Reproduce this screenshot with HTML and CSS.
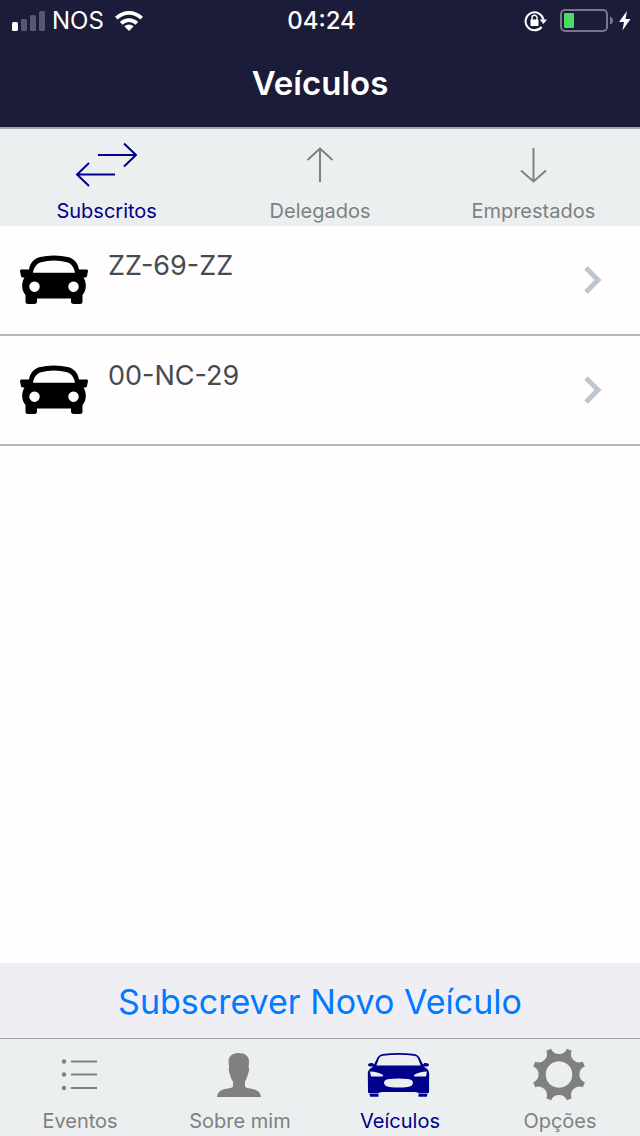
FILE: index.html
```html
<!DOCTYPE html>
<html lang="pt">
<head>
<meta charset="utf-8">
<meta name="viewport" content="width=device-width, initial-scale=1">
<title>Veículos</title>
<link rel="stylesheet" href="styles.css">
</head>
<body>
<div class="app">
  <header class="header">
    <div class="status">
      <div class="status-side">
        <svg class="signal" viewBox="0 0 34 22" aria-hidden="true">
          <rect x="0" y="12" width="6" height="9" rx="1.5" fill="#fff"/>
          <g fill="#565770">
            <rect x="9" y="9" width="6" height="12" rx="1.5"/>
            <rect x="18" y="5" width="6" height="16" rx="1.5"/>
            <rect x="27" y="1" width="6" height="20" rx="1.5"/>
          </g>
        </svg>
        <span class="carrier">NOS</span>
        <svg class="wifi" viewBox="0 0 28 22" aria-hidden="true">
          <g fill="none" stroke="#fff" stroke-width="3.8">
            <path d="M1.3 8.2Q7 2.9 14 2.9T26.7 8.2"/>
            <path d="M6.2 13.3Q9.600 10.100 14 10.100T21.800 13.300"/>
          </g>
          <path d="M14 21L9.300 16.300Q14 12.800 18.700 16.300Z" fill="#fff"/>
        </svg>
      </div>
      <time class="clock">04:24</time>
      <div class="status-side status-end">
        <svg class="lock" viewBox="0 0 24 22" aria-hidden="true">
          <path d="M17.600 17A9 9 0 1 1 19.400 9.500" fill="none" stroke="#fff" stroke-width="2"/>
          <path d="M15.800 9.500H23L19.400 14Z" fill="#fff"/>
          <rect x="6.500" y="9.500" width="8" height="6.500" rx=".8" fill="#fff"/>
          <path d="M8 10V7.700a2.500 2.500 0 0 1 5 0v2.300" fill="none" stroke="#fff" stroke-width="1.400"/>
        </svg>
        <svg class="battery" viewBox="0 0 54 24" aria-hidden="true">
          <rect x="1" y="1" width="46" height="21" rx="4" fill="none" stroke="#777789" stroke-width="2"/>
          <rect x="4" y="4" width="10" height="15" rx="1" fill="#4cd964"/>
          <path d="M50 7.500Q53 8.500 53 11.500T50 15.500Z" fill="#777789"/>
        </svg>
        <svg class="bolt" viewBox="0 0 12 20" aria-hidden="true">
          <path d="M8 0L0 11H5L3.500 19.500L11.500 8H6.500Z" fill="#fff"/>
        </svg>
      </div>
    </div>
    <h1 class="title">Veículos</h1>
  </header>

  <nav class="tabs tabs-top" aria-label="Tipo de veículo">
    <button class="tab active" type="button">
      <svg class="tab-icon" viewBox="0 0 72 70" aria-hidden="true">
        <path class="line" d="M27 26H65M53 14.500L65 26L53 37.500M44 45.500H7M18 34L6 45.500L18 57"/>
      </svg>
      <span>Subscritos</span>
    </button>
    <button class="tab" type="button">
      <svg class="tab-icon" viewBox="0 0 72 70" aria-hidden="true">
        <path class="line" d="M36 53V20M23.500 31L36 19.500L48.500 31"/>
      </svg>
      <span>Delegados</span>
    </button>
    <button class="tab" type="button">
      <svg class="tab-icon" viewBox="0 0 72 70" aria-hidden="true">
        <path class="line" d="M36.500 19V52M24 41.500L36.500 52.500L49 41.500"/>
      </svg>
      <span>Emprestados</span>
    </button>
  </nav>

  <main class="content">
    <ul class="list">
      <li>
        <a class="row" href="#zz-69-zz">
          <svg class="car" viewBox="0 0 68 50" aria-hidden="true">
            <path fill="#000" fill-rule="evenodd" d="M9 14.500C10 8 14 4 19 2.300Q34-1.300 49 2.300C54 4 58 8 59 14.500H67Q68 14.500 68 16L67 21Q66.800 22.500 65 22.500H63.500C67 28 66.500 36 62.500 40V46.500Q62.500 49 60 49H54Q51 49 51 46.500V43.500H17V46.500Q17 49 14 49H8Q5.500 49 5.500 46.500V40C1.500 36 1 28 4.500 22.500H3Q1.200 22.500 1 21L0 16Q0 14.500 1 14.500ZM13 17.700H55C54 12 51 8.500 47 7.300Q34 3.700 21 7.300C17 8.500 14 12 13 17.700ZM14.500 26.500a5.200 5.200 0 1 0 .01 0ZM53.500 26.500a5.200 5.200 0 1 0 .01 0Z"/>
          </svg>
          <span class="plate">ZZ-69-ZZ</span>
          <svg class="chevron" viewBox="0 0 20 28" aria-hidden="true"><path d="M2 2L14 14L2 26"/></svg>
        </a>
      </li>
      <li>
        <a class="row" href="#00-nc-29">
          <svg class="car" viewBox="0 0 68 50" aria-hidden="true">
            <path fill="#000" fill-rule="evenodd" d="M9 14.500C10 8 14 4 19 2.300Q34-1.300 49 2.300C54 4 58 8 59 14.500H67Q68 14.500 68 16L67 21Q66.800 22.500 65 22.500H63.500C67 28 66.500 36 62.500 40V46.500Q62.500 49 60 49H54Q51 49 51 46.500V43.500H17V46.500Q17 49 14 49H8Q5.500 49 5.500 46.500V40C1.500 36 1 28 4.500 22.500H3Q1.200 22.500 1 21L0 16Q0 14.500 1 14.500ZM13 17.700H55C54 12 51 8.500 47 7.300Q34 3.700 21 7.300C17 8.500 14 12 13 17.700ZM14.500 26.500a5.200 5.200 0 1 0 .01 0ZM53.500 26.500a5.200 5.200 0 1 0 .01 0Z"/>
          </svg>
          <span class="plate">00-NC-29</span>
          <svg class="chevron" viewBox="0 0 20 28" aria-hidden="true"><path d="M2 2L14 14L2 26"/></svg>
        </a>
      </li>
    </ul>
  </main>

  <button class="subscribe" type="button">Subscrever Novo Veículo</button>

  <nav class="tabs tabs-bottom" aria-label="Principal">
    <button class="tab" type="button">
      <svg class="tab-icon" viewBox="0 0 72 70" aria-hidden="true">
        <path class="line" d="M27 22.500H53M27 35.500H53M27 49H53"/>
        <g fill="currentColor"><circle cx="20" cy="22.500" r="2.200"/><circle cx="20" cy="35.500" r="2.200"/><circle cx="20" cy="49" r="2.200"/></g>
      </svg>
      <span>Eventos</span>
    </button>
    <button class="tab" type="button">
      <svg class="tab-icon" viewBox="0 0 72 70" aria-hidden="true">
        <path fill="currentColor" d="M34.500 14C41 14 45 17 45 22.500C45 25 44.600 27 44.700 28.500C45.300 30 45.300 32 44.300 34C43.300 38 42.300 40.500 41 42.500V47C41.300 49 45 49.300 49 50C54 51 56.700 54 57 58H13C13.300 54 16 51 21 50C25 49.300 28.700 49 29 47V42.500C27.500 40.500 26.500 38 25.500 34C24.500 32 24.500 30 25.200 28.500C25.200 27 24.600 25 24.600 22.500C24.600 17 28.500 14 34.500 14Z"/>
      </svg>
      <span>Sobre mim</span>
    </button>
    <button class="tab active" type="button">
      <svg class="tab-icon" viewBox="0 0 72 70" aria-hidden="true">
        <path fill="currentColor" fill-rule="evenodd" d="M10 25.500L13.500 18.500Q15 15.500 18.500 15Q34.500 12.800 50.500 15Q54 15.500 55.500 18.500L59 25.500L60.500 24Q64.500 23.500 65 25.500Q65 27.800 61 27.500H59.500C64 30 65.200 32 65.200 35L65 53Q65 54.300 63 54.300H55Q52.500 53 50.500 53H18.500Q16.500 53 14 54.300H6Q4 54.300 4 53L3.800 35C3.800 32 5 30 9.500 27.500H8Q4 27.800 4 25.500Q4.500 23.500 8.500 24ZM12.300 26.500H56.700L54 19.500Q53 17 50 16.700Q34.500 15 19 16.700Q16 17 15 19.500ZM6 32.500L7 37.500H17Q19.500 37.500 19 36Q14 32.500 6 32.500ZM63 32.500L62 37.500H52Q49.500 37.500 50 36Q55 32.500 63 32.500ZM25 40Q20 40.500 20 44Q20.500 47.500 25.500 48Q34.500 49 43.500 48Q48.500 47.500 49 44Q49 40.500 44 40Q34.500 39 25 40Z"/>
        <path fill="currentColor" d="M5.500 54.800H14.500V57.800H6.200ZM63.500 54.800H54.500V57.800H62.800Z"/>
      </svg>
      <span>Veículos</span>
    </button>
    <button class="tab" type="button">
      <svg class="tab-icon" viewBox="0 0 72 70" aria-hidden="true">
        <path transform="translate(35 35.500)" fill="currentColor" fill-rule="evenodd" d="M-7.900-25.800A8.500 8.500 0 0 0 7.900-25.800L12.700-23.800A8.500 8.500 0 0 0 23.800-12.700L25.800-7.900A8.500 8.500 0 0 0 25.800 7.900L23.800 12.700A8.500 8.500 0 0 0 12.700 23.800L7.900 25.800A8.500 8.500 0 0 0-7.900 25.800L-12.700 23.800A8.500 8.500 0 0 0-23.800 12.700L-25.800 7.900A8.500 8.500 0 0 0-25.800-7.900L-23.800-12.700A8.500 8.500 0 0 0-12.700-23.800ZM0-13.300A13.300 13.300 0 1 0 .01-13.300Z"/>
      </svg>
      <span>Opções</span>
    </button>
  </nav>
</div>
</body>
</html>
```
FILE: styles.css
```css
* {
  box-sizing: border-box;
}

body {
  margin: 0;
  font-family: Inter, "Liberation Sans", sans-serif;
  background: #fffdfe;
}

button {
  margin: 0;
  border: 0;
  background: none;
  font: inherit;
  cursor: pointer;
}

svg {
  display: block;
  flex: none;
}

.app {
  display: flex;
  flex-direction: column;
  min-height: 100vh;
}

.header {
  color: #fff;
  background: #1b1b3a;
  border-bottom: 2px solid #a2a3ac;
}

.status {
  display: grid;
  grid-template-columns: 1fr auto 1fr;
  align-items: center;
  height: 42px;
  padding: 0 9px 0 12px;
  font-size: 24px;
  line-height: 42px;
}

.status-side {
  display: flex;
  align-items: center;
}

.status-end {
  justify-content: flex-end;
  gap: 5px;
}

.signal {
  width: 34px;
  height: 22px;
}

.carrier {
  margin: 0 11px 0 6px;
}

.wifi {
  width: 28px;
  height: 22px;
}

.clock {
  font-weight: 500;
}

.lock {
  width: 24px;
  height: 22px;
  margin-right: 7px;
}

.battery {
  width: 54px;
  height: 24px;
}

.bolt {
  width: 12px;
  height: 20px;
}

.title {
  margin: 0;
  padding: 20px 0 22px;
  font-size: 33px;
  font-weight: 600;
  line-height: 43px;
  text-align: center;
}

.tabs {
  display: grid;
  grid-auto-flow: column;
  grid-auto-columns: 1fr;
  background: #ebeff0;
}

.tabs-bottom {
  border-top: 1px solid #a2a5a8;
}

.tab {
  display: flex;
  flex-direction: column;
  align-items: center;
  padding: 0 0 3px;
  color: #808080;
  font-size: 20px;
  line-height: 24px;
}

.tab.active {
  color: #00008b;
}

.tab-icon {
  width: 72px;
  height: 70px;
}

.line {
  fill: none;
  stroke: currentColor;
  stroke-width: 2;
}

.content {
  flex: 1;
}

.list {
  margin: 0;
  padding: 0;
  list-style: none;
}

.row {
  display: flex;
  align-items: center;
  gap: 20px;
  padding: 0 36px 0 20px;
  border-bottom: 2px solid #b8b7b9;
  color: #454b50;
  text-decoration: none;
}

.car {
  width: 68px;
  height: 50px;
}

.plate {
  flex: 1;
  padding: 24px 0 52px;
  font-size: 27px;
  line-height: 32px;
}

.chevron {
  width: 20px;
  height: 28px;
  fill: none;
  stroke: #bdc6cf;
  stroke-width: 5;
}

.subscribe {
  padding: 17px 16px 15px;
  color: #007aff;
  background: #efeef4;
  font-size: 34px;
  line-height: 43px;
}
```
